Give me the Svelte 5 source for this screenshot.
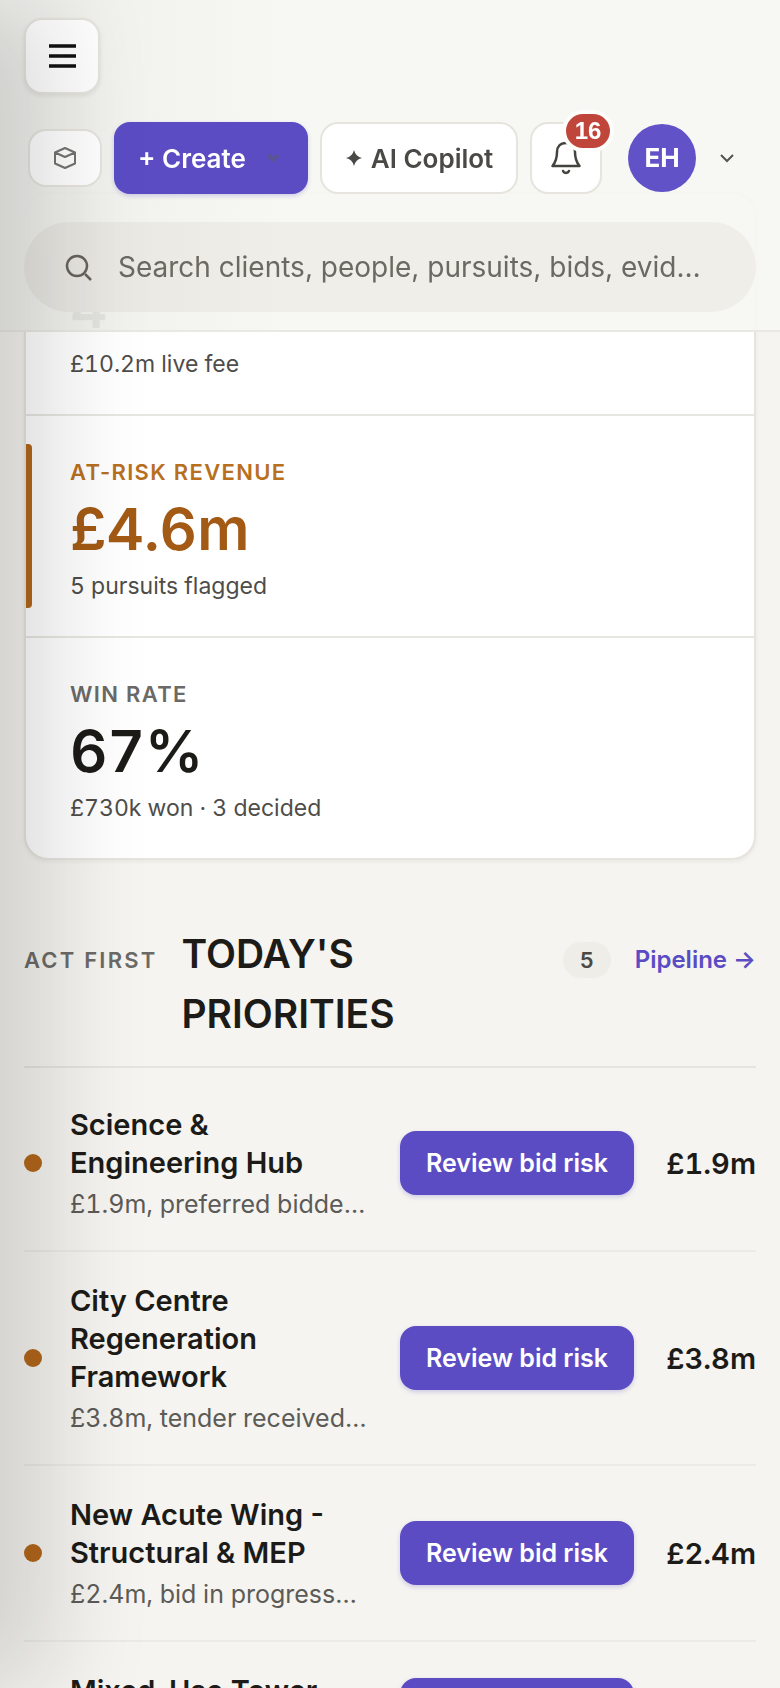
<script>
	let query = '';

	const metrics = [
		{ value: '4', note: '£10.2m live fee' },
		{ label: 'At-risk revenue', value: '£4.6m', note: '5 pursuits flagged', risk: true },
		{ label: 'Win rate', value: '67%', note: '£730k won · 3 decided' }
	];

	const priorities = [
		{ name: 'Science & Engineering Hub', detail: '£1.9m, preferred bidde…', fee: '£1.9m' },
		{ name: 'City Centre Regeneration Framework', detail: '£3.8m, tender received…', fee: '£3.8m' },
		{ name: 'New Acute Wing - Structural & MEP', detail: '£2.4m, bid in progress…', fee: '£2.4m' },
		{ name: 'Mixed-Use Tower', detail: '', fee: '' }
	];
</script>

<svelte:head>
	<title>Today's priorities</title>
</svelte:head>

<div class="app">
	<aside class="drawer"></aside>

	<header>
		<button class="box menu" aria-label="Open menu">
			<svg width="28" height="28" viewBox="0 0 28 28" stroke="#111" stroke-width="3.500">
				<path d="M1 4h27M1 14h27M1 24h27" />
			</svg>
		</button>

		<div class="toolbar">
			<button class="box cube" aria-label="Workspace">
				<svg width="24" height="24" viewBox="0 0 24 24" fill="none" stroke="#74736f" stroke-width="2" stroke-linejoin="round">
					<path d="M12 2l10 4.500v11L12 22 2 17.500v-11zM2 6.500L12 11l10-4.500" />
				</svg>
			</button>
			<button class="create">
				<span>+ Create</span>
				<svg width="14" height="14" viewBox="0 0 14 14" fill="none" stroke="#5a5494" stroke-width="4">
					<path d="M2 4l5 5 5-5" />
				</svg>
			</button>
			<button class="box copilot">
				<svg width="18" height="18" viewBox="0 0 18 18" fill="#4a4945">
					<path d="M9 1q1.500 6.500 8 8-6.500 1.500-8 8-1.500-6.500-8-8 6.500-1.500 8-8z" />
				</svg>
				<span>AI Copilot</span>
			</button>
			<button class="box bell" aria-label="Notifications">
				<svg width="34" height="36" viewBox="0 0 34 36" fill="none" stroke="#44433f" stroke-width="2.500" stroke-linecap="round" stroke-linejoin="round">
					<path d="M17 3c-6 0-9 4-9 9 0 8-2 11-4.500 14h27C28 23 26 20 26 12c0-5-3-9-9-9zM14 31c1 2.500 5 2.500 6 0" />
				</svg>
				<span class="badge">16</span>
			</button>
			<button class="account" aria-label="Account">
				<span class="avatar">EH</span>
				<svg width="14" height="10" viewBox="0 0 14 10" fill="none" stroke="#55544f" stroke-width="2">
					<path d="M1 2l6 6 6-6" />
				</svg>
			</button>
		</div>

		<label class="search">
			<svg width="28" height="28" viewBox="0 0 28 28" fill="none" stroke="#66645c" stroke-width="2.500">
				<circle cx="13" cy="13" r="10" />
				<path d="M21 21l6 6" />
			</svg>
			<input
				type="text"
				aria-label="Search"
				placeholder="Search clients, people, pursuits, bids, evid…"
				bind:value={query}
			/>
		</label>
	</header>

	<main>
		<section class="metrics">
			{#each metrics as metric}
				<div class="metric" class:risk={metric.risk}>
					<div class="label">{metric.label || ''}</div>
					<div class="value">{metric.value}</div>
					<div class="note">{metric.note}</div>
				</div>
			{/each}
		</section>

		<section class="priorities">
			<div class="heading">
				<span class="eyebrow">Act first</span>
				<h2>Today's priorities</h2>
				<span class="count">5</span>
				<a href="#pipeline">Pipeline →</a>
			</div>
			<ul>
				{#each priorities as item}
					<li>
						<span class="dot"></span>
						<div class="text">
							<h3>{item.name}</h3>
							<p>{item.detail}</p>
						</div>
						<button class="review">Review bid risk</button>
						<span class="fee">{item.fee}</span>
					</li>
				{/each}
			</ul>
		</section>
	</main>
</div>

<style>
	:global(body) {
		background: #f5f4f0;
	}

	.app {
		height: 100vh;
		overflow-y: auto;
		scrollbar-width: none;
		font-family: Inter, "Liberation Sans", sans-serif;
		color: #1c1b18;
	}

	button {
		font-family: inherit;
		font-size: 26px;
		font-weight: 600;
		border: none;
		padding: 0;
		white-space: nowrap;
		cursor: pointer;
	}

	svg {
		display: block;
		flex: none;
	}

	/* closed drawer: only its shadow reaches the page */
	.drawer {
		position: fixed;
		top: 0;
		bottom: 0;
		right: 100%;
		width: 300px;
		z-index: 3;
		pointer-events: none;
		box-shadow: 48px 0 96px rgba(20, 20, 16, 0.16);
	}

	header {
		position: fixed;
		top: 0;
		left: 0;
		right: 0;
		z-index: 2;
		display: flex;
		flex-direction: column;
		gap: 28px;
		padding: 18px 24px;
		background:
			linear-gradient(90deg, rgba(20, 20, 20, 0.03) 80px, rgba(20, 20, 20, 0) 290px),
			rgba(247, 246, 242, 0.94);
		border-bottom: 2px solid #eae8e2;
	}

	.box {
		display: flex;
		align-items: center;
		justify-content: center;
		box-sizing: border-box;
		background: #fff;
		border: 2px solid #e6e4dd;
		border-radius: 18px;
		color: #4a4945;
	}

	.menu {
		width: 76px;
		height: 76px;
		box-shadow: 0 2px 4px rgba(0, 0, 0, 0.08);
	}

	.toolbar {
		display: flex;
		align-items: center;
		gap: 12px;
		padding-left: 4px;
	}

	.cube {
		width: 74px;
		height: 58px;
	}

	.create {
		display: flex;
		align-items: center;
		justify-content: space-between;
		box-sizing: border-box;
		width: 194px;
		height: 72px;
		padding: 0 28px 0 24px;
		border-radius: 16px;
		background: #5b4cc4;
		box-shadow: 0 2px 4px rgba(91, 76, 196, 0.25);
		color: #fff;
	}

	.copilot {
		gap: 8px;
		width: 198px;
		height: 72px;
	}

	.bell {
		position: relative;
		width: 72px;
		height: 72px;
	}

	.badge {
		position: absolute;
		top: -10px;
		right: -10px;
		min-width: 44px;
		height: 34px;
		line-height: 34px;
		border-radius: 17px;
		background: #c0453a;
		box-shadow: 0 0 0 4px #fdfdfb;
		color: #fff;
		font-family: "Liberation Sans", sans-serif;
		font-size: 24px;
		font-weight: 700;
	}

	.account {
		display: flex;
		align-items: center;
		gap: 24px;
		margin-left: 14px;
		background: none;
	}

	.avatar {
		width: 68px;
		line-height: 68px;
		border-radius: 50%;
		background: #6152c8;
		color: #fff;
		font-size: 26px;
		font-weight: 700;
	}

	.search {
		display: flex;
		align-items: center;
		gap: 26px;
		height: 90px;
		padding: 0 40px;
		border-radius: 45px;
		background:
			linear-gradient(90deg, rgba(20, 20, 10, 0.03) 60px, rgba(20, 20, 10, 0) 260px),
			#efeee9;
	}

	.search input {
		flex: 1;
		min-width: 0;
		padding: 0;
		border: none;
		outline: none;
		background: none;
		font-family: inherit;
		font-size: 28px;
		text-overflow: ellipsis;
	}

	.search input::placeholder {
		color: #6b6a62;
	}

	main {
		padding: 192px 24px 24px;
	}

	.metrics {
		background: #fff;
		border: 2px solid #e6e4dd;
		border-radius: 24px;
		box-shadow: 0 2px 4px rgba(0, 0, 0, 0.05);
	}

	.metric {
		position: relative;
		padding: 40px 44px 34px;
	}

	.metric + .metric {
		border-top: 2px solid #e8e6e0;
	}

	.metric.risk::before {
		content: '';
		position: absolute;
		left: 0;
		top: 28px;
		bottom: 28px;
		width: 6px;
		border-radius: 0 4px 4px 0;
		background: #b3661a;
	}

	.label {
		height: 32px;
		line-height: 32px;
		font-size: 22px;
		font-weight: 600;
		letter-spacing: 0.06em;
		text-transform: uppercase;
		color: #6b6a66;
	}

	.value {
		margin: 8px 0;
		line-height: 66px;
		font-size: 58px;
		font-weight: 600;
		font-variant-numeric: tabular-nums;
	}

	.note {
		line-height: 32px;
		font-size: 23px;
		font-variant-numeric: tabular-nums;
		color: #4e4d4a;
	}

	.risk .label {
		color: #b8701f;
	}

	.risk .value {
		color: #a35a14;
	}

	.priorities {
		margin-top: 64px;
	}

	.heading {
		display: flex;
		align-items: baseline;
		gap: 24px;
		padding-bottom: 22px;
		border-bottom: 2px solid #e6e4df;
	}

	.eyebrow {
		font-size: 22px;
		font-weight: 600;
		letter-spacing: 0.1em;
		text-transform: uppercase;
		white-space: nowrap;
		color: #6b6a66;
	}

	h2 {
		flex: 1;
		margin: 0;
		font-size: 39px;
		font-weight: 600;
		line-height: 60px;
		text-transform: uppercase;
	}

	.count {
		padding: 0 17px;
		border-radius: 18px;
		background: #efede7;
		font-size: 22px;
		font-weight: 600;
		line-height: 36px;
		color: #4a4945;
	}

	.heading a {
		font-size: 24px;
		font-weight: 600;
		white-space: nowrap;
		text-decoration: none;
		color: #5b4cc4;
	}

	ul {
		list-style: none;
		margin: 0;
		padding: 8px 0 0;
	}

	li {
		display: grid;
		grid-template-columns: 18px 1fr auto 94px;
		align-items: center;
		gap: 28px;
		padding: 30px 0;
		border-bottom: 2px solid #ebeae5;
	}

	.dot {
		height: 18px;
		border-radius: 50%;
		background: #b3661a;
	}

	.text {
		min-width: 0;
	}

	h3 {
		margin: 0 0 6px;
		font-size: 29px;
		font-weight: 600;
		line-height: 38px;
	}

	p {
		overflow: hidden;
		height: 32px;
		margin: 0;
		font-size: 25px;
		font-variant-numeric: tabular-nums;
		line-height: 32px;
		white-space: nowrap;
		text-overflow: ellipsis;
		color: #5c5b57;
	}

	.review {
		height: 64px;
		padding: 0 26px;
		border-radius: 16px;
		background: #5b4cc4;
		box-shadow: 0 2px 4px rgba(91, 76, 196, 0.25);
		color: #fff;
		font-size: 25px;
	}

	.fee {
		font-size: 29px;
		font-weight: 600;
		font-variant-numeric: tabular-nums;
		text-align: right;
	}
</style>
